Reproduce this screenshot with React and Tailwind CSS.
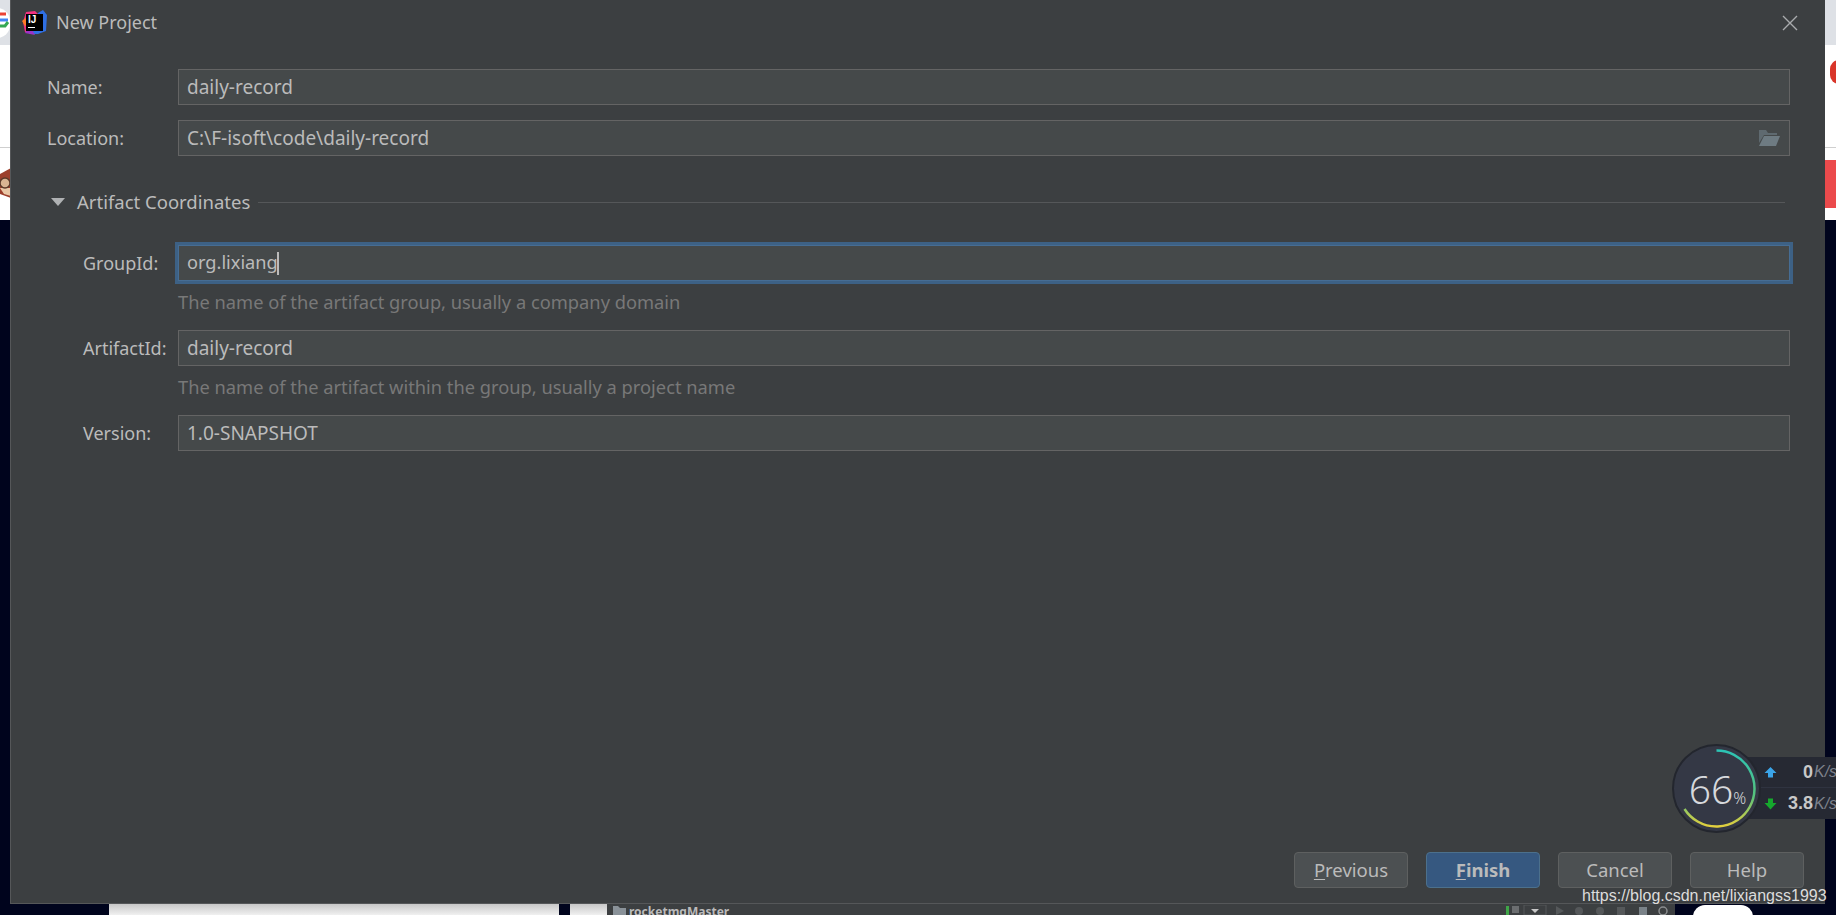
const uiFont = { fontFamily: '"Noto Sans", "Open Sans", sans-serif' }
const arial = { fontFamily: '"Liberation Sans", sans-serif' }

function Field({ label, value, indent, focused, caret, icon, hint }) {
  return (
    <div className={hint ? 'mb-[16px]' : 'mb-[15px]'}>
      <div className={indent ? 'flex items-center pl-[72px]' : 'flex items-center pl-[36px]'}>
        <div className={indent ? 'w-[95px] shrink-0 text-[18px]' : 'w-[131px] shrink-0 text-[18px]'}>{label}</div>
        <div
          className={
            focused
              ? 'flex h-[36px] w-[1612px] items-center border border-[#466d94] bg-[#45494a] pl-[8px] pr-[8px] text-[18.2px] outline-[3px] outline-[#3d6185]'
              : 'flex h-[36px] w-[1612px] items-center border border-[#646464] bg-[#45494a] pl-[8px] pr-[8px] text-[19px]'
          }
        >
          <span>{value}</span>
          {caret && <span className="ml-[-1px] h-[23px] w-[2px] bg-[#bbbbbb]" />}
          {icon && (
            <svg className="ml-auto" width="24" height="18" viewBox="0 0 24 18">
              <path d="M2 1h7l2 3h9v2H7L2 14z" fill="#5f6a70" />
              <path d="M7 7h16l-4 10H2z" fill="#6e7b82" />
            </svg>
          )}
        </div>
      </div>
      {hint && <div className="mt-[9px] h-[24px] pl-[167px] text-[18.3px] leading-[24px] text-[#787878]">{hint}</div>}
    </div>
  )
}

function DialogButton({ children, primary }) {
  return (
    <button
      className={
        primary
          ? 'h-[36px] w-[114px] rounded-[4px] border border-[#4c708c] bg-[#365880] text-[18.5px] font-bold text-[#bbbbbb]'
          : 'h-[36px] w-[114px] rounded-[4px] border border-[#5e6060] bg-[#4c5052] text-[18.5px] text-[#bbbbbb]'
      }
    >
      {children}
    </button>
  )
}

function IdeaLogo() {
  return (
    <div className="relative h-[25px] w-[25px] shrink-0">
      <svg className="absolute inset-0" width="25" height="25" viewBox="0 0 25 25">
        <path d="M4 2l9-1 3 3-9 19-4-1-2-10z" fill="#f2317f" />
        <path d="M0 11l5-4 3 6-5 3z" fill="#fe7c26" />
        <path d="M16 3l5-3 4 5-1 16-8 3-9 0z" fill="#2f6fe4" />
        <path d="M3 23l5-7 5 9z" fill="#9c32c7" />
        <rect x="4" y="4" width="17" height="17" fill="#000000" />
        <rect x="6" y="17" width="7" height="1" fill="#ffffff" />
      </svg>
      <span className="absolute left-[6px] top-[4px] text-[10px] font-bold leading-[11px] text-white" style={arial}>
        IJ
      </span>
    </div>
  )
}

function SpeedWidget() {
  return (
    <div className="absolute left-[1672px] top-[744px] flex h-[89px] w-[164px] items-center">
      <div className="absolute left-[60px] top-[13px] h-[62px] w-[104px] bg-[#262933]">
        <div className="flex h-[31px] items-center justify-end border-b border-[#2f3340] pl-[32px]">
          <svg className="mr-auto" width="13" height="12" viewBox="0 0 13 12">
            <path d="M6.5 1l6 6H9v4.500H4V7H.5z" fill="#3ba4e8" />
          </svg>
          <span className="text-[18px] font-bold text-[#c8c8c8]" style={arial}>0</span>
          <span className="ml-[1px] w-[22px] overflow-hidden whitespace-nowrap text-[16px] italic text-[#7d818c]" style={arial}>K/s</span>
        </div>
        <div className="flex h-[31px] items-center justify-end pl-[32px]">
          <svg className="mr-auto" width="13" height="12" viewBox="0 0 13 12">
            <path d="M6.500 11.500L.5 5H4V.5h5V5h3.500z" fill="#16a82d" />
          </svg>
          <span className="text-[18px] font-bold text-[#c8c8c8]" style={arial}>3.8</span>
          <span className="ml-[1px] w-[22px] overflow-hidden whitespace-nowrap text-[16px] italic text-[#7d818c]" style={arial}>K/s</span>
        </div>
      </div>
      <div className="relative flex h-[89px] w-[89px] items-center justify-center rounded-full border-2 border-[#23262e] bg-[#343845]">
        <svg className="absolute left-[-1px] top-[-1px]" width="87" height="87" viewBox="0 0 87 87">
          <defs>
            <linearGradient id="ring" x1="0" y1="0" x2="0" y2="1">
              <stop offset="0" stopColor="#2cc3b5" />
              <stop offset="0.6" stopColor="#57c27c" />
              <stop offset="1" stopColor="#e2cf3e" />
            </linearGradient>
          </defs>
          <path d="M43.500 5.500A38 38 0 1 1 11.500 64" fill="none" stroke="url(#ring)" strokeWidth="2.5" />
        </svg>
        <span className="relative ml-[2px] flex items-baseline font-light text-[#d6d8dc]" style={uiFont}>
          <span className="text-[39px] leading-none">66</span>
          <span className="text-[16px] leading-none">%</span>
        </span>
      </div>
    </div>
  )
}

export default function App() {
  return (
    <div className="relative h-[915px] w-[1836px] overflow-hidden bg-[#00041d]" style={uiFont}>
      {/* browser window peeking out behind the dialog */}
      <div className="absolute left-0 top-0 h-[220px] w-full bg-white">
        <div className="h-[45px] bg-[#dee1e6]" />
        <div className="mt-[102px] h-px bg-[#cfcfcf]" />
      </div>
      <div className="absolute left-[-16px] top-[8px] h-[30px] w-[26px] rounded-full bg-white" />
      <svg className="absolute left-0 top-[10px]" width="10" height="20" viewBox="0 0 10 20">
        <path d="M0 4h6" stroke="#ea4335" strokeWidth="3" />
        <path d="M0 10h8" stroke="#4285f4" strokeWidth="3" />
        <path d="M8 12l-3 4H0" stroke="#34a853" strokeWidth="3" fill="none" />
      </svg>
      <svg className="absolute left-0 top-[166px]" width="11" height="34" viewBox="0 0 11 34">
        <path d="M0 8L11 2v30L0 28z" fill="#9c3f2c" />
        <path d="M0 22h11v8L4 28z" fill="#eac7a6" />
        <circle cx="5" cy="17" r="5" fill="#d9b492" stroke="#5a3a2a" strokeWidth="1.5" />
      </svg>
      <div className="absolute right-[-12px] top-[60px] h-[24px] w-[18px] rounded-full bg-[#d9352a]" />
      <div className="absolute right-0 top-[160px] h-[48px] w-[11px] bg-[#eb4a4c]" />
      <div className="absolute bottom-0 left-[109px] h-[11px] w-[450px] bg-gradient-to-b from-[#c8c8c8] to-[#f0f0f0]" />
      <div className="absolute bottom-0 left-[570px] h-[11px] w-[37px] bg-gradient-to-b from-[#c8c8c8] to-[#f0f0f0]" />
      <div className="absolute bottom-0 left-[607px] flex h-[11px] w-[1068px] items-start overflow-hidden bg-[#3c3f41] pl-[6px] text-[#bbbbbb]">
        <svg className="mt-[2px] shrink-0" width="13" height="9" viewBox="0 0 13 9">
          <path d="M0 0h5l2 2h6v7H0z" fill="#8a9299" />
        </svg>
        <span className="ml-[3px] text-[12px] font-bold leading-[15px]">rocketmqMaster</span>
        <svg className="ml-auto mr-[4px] mt-[1px] shrink-0" width="165" height="10" viewBox="0 0 165 10">
          <rect x="0" y="1" width="3" height="9" fill="#3fa648" />
          <rect x="6" y="1" width="7" height="7" fill="#6b6e70" />
          <path d="M18 0h22v10H18z" fill="none" stroke="#55585a" />
          <path d="M25 4h8l-4 4z" fill="#c8c8c8" />
          <path d="M50 1l8 5-8 4z" fill="#55585a" />
          <circle cx="73" cy="6" r="4" fill="#55585a" />
          <circle cx="94" cy="6" r="4" fill="#55585a" />
          <rect x="111" y="2" width="8" height="8" fill="#55585a" />
          <rect x="133" y="2" width="8" height="8" fill="#7a8288" />
          <circle cx="157" cy="6" r="4" fill="none" stroke="#8a8d8f" strokeWidth="1.500" />
        </svg>
      </div>
      <div className="absolute bottom-[-14px] left-[1693px] h-[24px] w-[60px] rounded-full bg-white" />

      {/* dialog */}
      <div className="relative ml-[10px] flex h-[904px] w-[1815px] flex-col border-b border-l border-[#555759] bg-[#3c3f41] text-[#bbbbbb]">
        <div className="flex h-[45px] shrink-0 items-center pl-[11px] pr-[27px]">
          <IdeaLogo />
          <span className="ml-[9px] text-[18px]">New Project</span>
          <svg className="ml-auto" width="16" height="16" viewBox="0 0 16 16">
            <path d="M1 1l14 14M15 1L1 15" stroke="#a9abad" strokeWidth="1.4" fill="none" />
          </svg>
        </div>

        <div className="pt-[24px]">
          <Field label="Name:" value="daily-record" />
          <Field label="Location:" value="C:\F-isoft\code\daily-record" icon />

          <div className="mb-[31px] mt-[34px] flex h-[24px] items-center pl-[40px] pr-[40px] text-[18.5px]">
            <svg width="14" height="8" viewBox="0 0 14 8">
              <path d="M0 0h14L7 8z" fill="#afb1b3" />
            </svg>
            <span className="ml-[12px]">Artifact Coordinates</span>
            <div className="ml-[8px] h-px flex-1 bg-[#555759]" />
          </div>

          <Field label="GroupId:" value="org.lixiang" indent focused caret hint="The name of the artifact group, usually a company domain" />
          <Field label="ArtifactId:" value="daily-record" indent hint="The name of the artifact within the group, usually a project name" />
          <Field label="Version:" value="1.0-SNAPSHOT" indent />
        </div>

        <div className="mt-auto flex justify-end gap-[18px] pb-[15px] pr-[21px]">
          <DialogButton><span className="underline underline-offset-2">P</span>revious</DialogButton>
          <DialogButton primary><span className="underline underline-offset-2">F</span>inish</DialogButton>
          <DialogButton>Cancel</DialogButton>
          <DialogButton>Help</DialogButton>
        </div>
      </div>

      <SpeedWidget />
      <div className="absolute left-[1582px] top-[886px] text-[16px] leading-[20px] text-[#dcdcdc]" style={arial}>
        https://blog.csdn.net/lixiangss1993
      </div>
    </div>
  )
}
